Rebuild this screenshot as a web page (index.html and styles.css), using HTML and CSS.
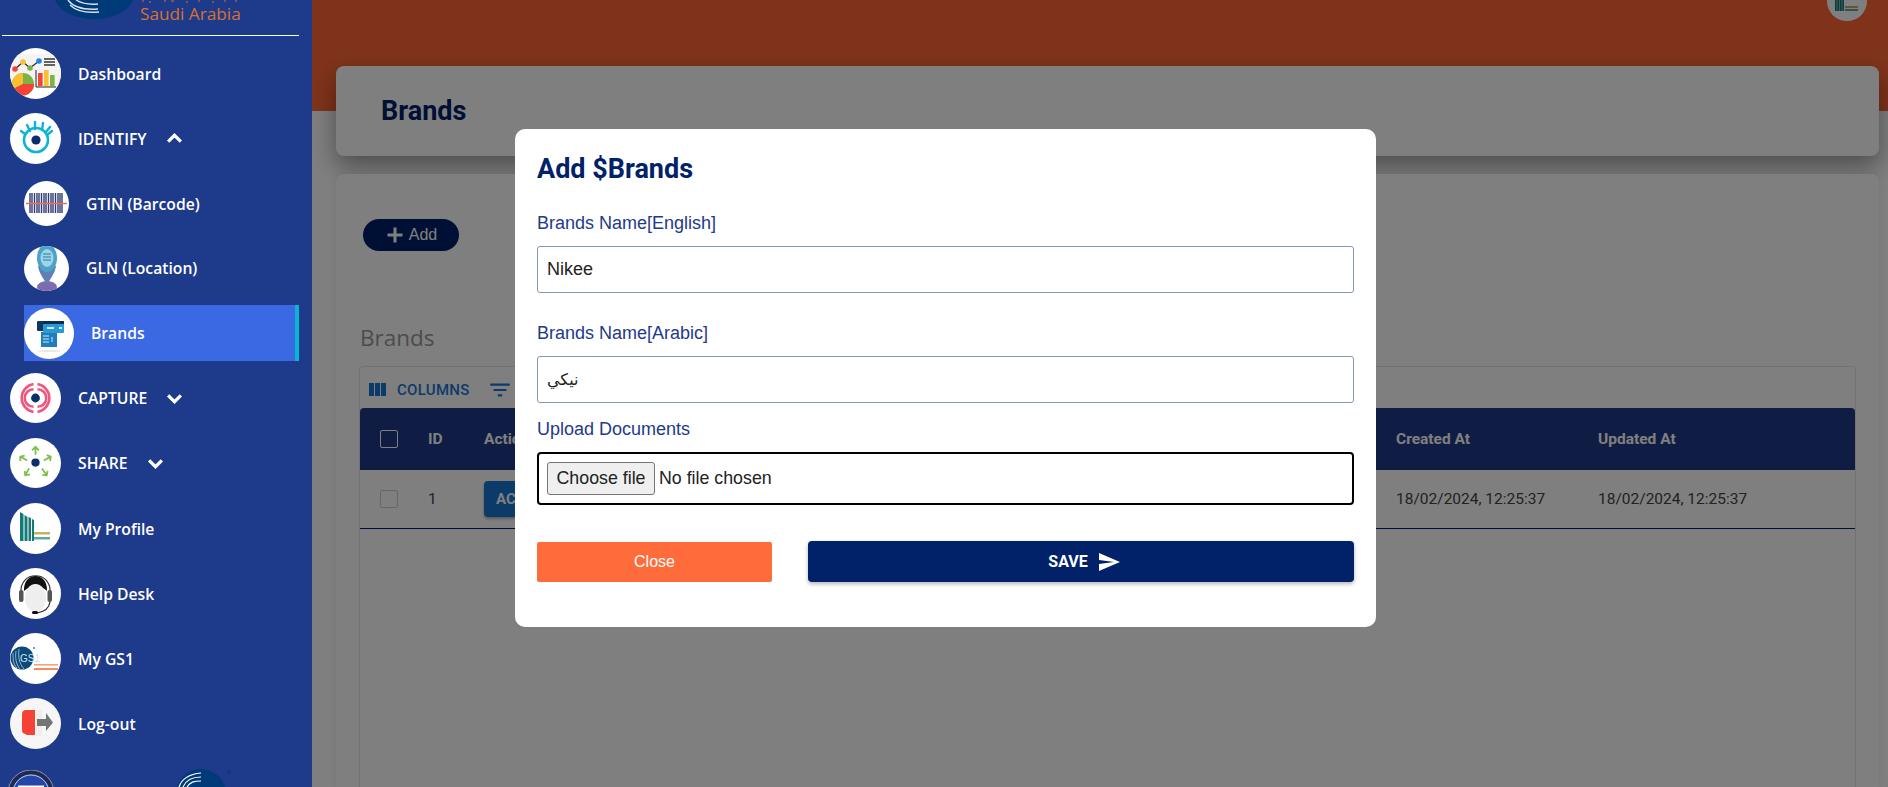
FILE: index.html
```html
<!DOCTYPE html>
<html lang="en">
<head>
<meta charset="utf-8">
<title>Brands</title>
<link rel="stylesheet" href="styles.css">
</head>
<body>
<div class="page">
  <aside class="sidebar">
    <div class="logo">
      <svg class="logo-mark" viewBox="0 0 78 19" width="78" height="19">
        <path d="M0 0H78C74 11 58 19 39 19S4 11 0 0Z" fill="#003a78"/>
        <path d="M13 0C18 7 28 10 43 9M21 0C26 3 32 5 43 4M15 5C22 12 32 13 44 12" fill="none" stroke="#fff" stroke-width="1.4" opacity=".85"/>
      </svg>
      <div class="logo-text">
        <svg class="logo-dots" viewBox="0 0 100 3" width="100" height="3">
          <path d="M2 1h2M9 2h2M24 1h2M31 1h3M46 2h2M58 1h2M72 2h2M84 1h2M95 1h2" stroke="#d9702f" stroke-width="1"/>
        </svg>
        <span class="logo-en">Saudi Arabia</span>
      </div>
    </div>
    <nav class="nav">
      <a class="row row-dash">
        <span class="ico ico-lg">
          <svg viewBox="0 0 51 51">
            <rect x="0" y="6" width="51" height="33" fill="#f4f4f4"/>
            <path d="M5 21L13 14 20 20 29 13" fill="none" stroke="#222" stroke-width="1.1"/>
            <circle cx="5" cy="21" r="2.8" fill="#f44336"/><circle cx="13" cy="14" r="2.8" fill="#fbc02d"/><circle cx="20" cy="20" r="2.8" fill="#7cb342"/><circle cx="29" cy="13" r="2.8" fill="#1e88e5"/>
            <path d="M34 11h11M34 14h11M34 17h11" stroke="#333" stroke-width="1.4"/>
            <path d="M26 22V39H46" fill="none" stroke="#222" stroke-width="1"/>
            <rect x="28" y="25" width="4.6" height="13" fill="#f44336"/><rect x="34" y="22" width="4.6" height="16" fill="#fbc02d"/><rect x="40" y="27" width="4.6" height="11" fill="#7cb342"/>
            <circle cx="13" cy="36" r="11" fill="#7cb342"/>
            <path d="M13 25A11 11 0 0 0 3 41L13 36Z" fill="#fbc02d"/>
            <path d="M3 41A11 11 0 0 0 24 36L13 36Z" fill="#f44336"/>
          </svg>
        </span>
        <span class="label">Dashboard</span>
      </a>
      <a class="row row-identify">
        <span class="ico ico-lg">
          <svg viewBox="0 0 51 51">
            <circle cx="26" cy="27" r="12" fill="none" stroke="#0cb4d8" stroke-width="2.6"/>
            <circle cx="26" cy="27" r="4.6" fill="#0a2f6b"/>
            <path d="M11 18L15 21M17 12L20 18M25 9V16M33 10L32 17M40 14L36 19M42 18L37 22" stroke="#0cb4d8" stroke-width="2.4" stroke-linecap="round"/>
          </svg>
        </span>
        <span class="label">IDENTIFY</span>
        <svg class="chev" viewBox="0 0 16 10"><path d="M2 8L8 2 14 8" /></svg>
      </a>
      <a class="row row-sub row-gtin">
        <span class="ico ico-sm">
          <svg viewBox="0 0 45 45">
            <path d="M6 12V32M8 12V32M10.500 12V32M13 12V32M15 12V32M17.500 12V32M20 12V32M22 12V32M24.500 12V32M27 12V32M29 12V32M31.500 12V32M34 12V32M36 12V32M38 12V32" stroke="#2e3a75" stroke-width="1.400"/>
            <path d="M2 22.500H43" stroke="#f06a55" stroke-width="1.400"/>
          </svg>
        </span>
        <span class="label">GTIN (Barcode)</span>
      </a>
      <a class="row row-sub row-gln">
        <span class="ico ico-sm">
          <svg viewBox="0 0 45 45">
            <ellipse cx="23" cy="41" rx="10" ry="6" fill="#7d6bb0"/>
            <path d="M14 20C15 28 23 38 23 38S31 28 32 20Z" fill="#5f7fb5"/>
            <ellipse cx="23" cy="12" rx="10" ry="14" fill="#4aa3c8"/>
            <ellipse cx="23" cy="12" rx="6.500" ry="9" fill="#9fd3e6"/>
            <path d="M19 8h8M19 11h8M19 14h8" stroke="#2b7ea3" stroke-width="1.200"/>
          </svg>
        </span>
        <span class="label">GLN (Location)</span>
      </a>
      <a class="row row-active">
        <span class="ico ico-md">
          <svg viewBox="0 0 50 51">
            <rect x="13" y="13" width="7" height="10" rx="1" fill="#12375f"/>
            <rect x="17" y="24" width="16" height="15" fill="#1f7fbe"/>
            <rect x="19" y="13" width="21" height="12" rx="1" fill="#2a9ad6"/>
            <rect x="19" y="13" width="21" height="3" fill="#0f2f52"/>
            <rect x="23" y="19" width="7" height="2" fill="#cfe9f7"/><rect x="35" y="19" width="3" height="2" fill="#cfe9f7"/>
            <path d="M19 28h6M19 31h6M19 34h6M28 29v5" stroke="#cfe9f7" stroke-width="1"/>
            <ellipse cx="25" cy="43" rx="12" ry="1" fill="#e8e8e8"/>
          </svg>
        </span>
        <span class="label">Brands</span>
      </a>
      <a class="row row-capture">
        <span class="ico ico-lg">
          <svg viewBox="0 0 51 51">
            <circle cx="25.500" cy="25.500" r="4.500" fill="#0a2f6b"/>
            <g fill="none" stroke="#f2557d" stroke-width="2.600">
              <path d="M23.500 16.500A9 9 0 0 0 23.500 34.500M27.500 16.500A9 9 0 0 1 27.500 34.500"/>
              <path d="M23.500 11.200A14.500 14.500 0 0 0 23.500 39.800M27.500 11.200A14.500 14.500 0 0 1 27.500 39.800"/>
            </g>
          </svg>
        </span>
        <span class="label">CAPTURE</span>
        <svg class="chev" viewBox="0 0 16 10"><path d="M2 2L8 8 14 2" /></svg>
      </a>
      <a class="row row-share">
        <span class="ico ico-lg">
          <svg viewBox="0 0 51 51">
            <circle cx="25.500" cy="25" r="4.200" fill="#0a2f6b"/>
            <g fill="none" stroke="#7cc04b" stroke-width="1.800">
              <path d="M25.500 17V9M22 12.500L25.500 9 29 12.500"/>
              <path d="M17 23L10 19M10 23.500L10 19 14.500 18"/>
              <path d="M34 23L41 19M37 17.500L41 19 40.500 23.500"/>
              <path d="M19 31L15 38M14.500 33.500L15 38 20 37"/>
              <path d="M32 31L37 38M32.500 37.500L37 38 37.800 33.500"/>
            </g>
          </svg>
        </span>
        <span class="label">SHARE</span>
        <svg class="chev" viewBox="0 0 16 10"><path d="M2 2L8 8 14 2" /></svg>
      </a>
      <a class="row row-profile">
        <span class="ico ico-lg">
          <svg viewBox="0 0 51 51">
            <path d="M10 9L13.500 11V38H10ZM14.500 12L17.500 14V38H14.500ZM18.500 14L21 15V38H18.500ZM22 16L24 17V38H22Z" fill="#147a78"/>
            <rect x="24" y="29" width="16" height="2.500" fill="#c7b15a"/>
            <rect x="24" y="34" width="16" height="2.500" fill="#5fa9a0"/>
          </svg>
        </span>
        <span class="label">My Profile</span>
      </a>
      <a class="row row-help">
        <span class="ico ico-lg">
          <svg viewBox="0 0 51 51">
            <path d="M11 25C9 2 42 2 40 25" fill="none" stroke="#333" stroke-width="1.200"/>
            <path d="M14 23C13 3 38 3 37 23Q26 13 14 23Z" fill="#111"/>
            <ellipse cx="25.500" cy="30" rx="10.500" ry="14" fill="#eeeeee"/>
            <rect x="9" y="22" width="4.500" height="12" rx="2" fill="#555"/><rect x="37.500" y="22" width="4.500" height="12" rx="2" fill="#555"/>
            <path d="M40 34C39 41 33 44 27 45" fill="none" stroke="#222" stroke-width="1.200"/>
            <rect x="22" y="43" width="6" height="3" rx="1.500" fill="#111"/>
          </svg>
        </span>
        <span class="label">Help Desk</span>
      </a>
      <a class="row row-gs1">
        <span class="ico ico-lg">
          <svg viewBox="0 0 51 51">
            <circle cx="12" cy="25" r="11.500" fill="#0c4a7c"/>
            <path d="M3 20C3 26 3 31 7 35M6 18C5 25 6 31 10 36M9 16C8 24 9 30 14 36" fill="none" stroke="#cfe0ec" stroke-width=".7"/>
            <text class="mini-gs1" x="10" y="29">GS1</text>
            <rect x="24" y="31" width="24" height="1.600" fill="#f3a27c"/>
            <rect x="24" y="35" width="24" height="2" fill="#f58a5c"/>
            <circle cx="24" cy="15" r="1" fill="#4a7ba6"/>
          </svg>
        </span>
        <span class="label">My GS1</span>
      </a>
      <a class="row row-logout">
        <span class="ico ico-lg ico-gray">
          <svg viewBox="0 0 51 51">
            <rect x="26" y="12" width="6" height="26" fill="#eeeeee"/>
            <path d="M12 16Q12 13 15 12H25V37H17L13 35Q12 34 12 32Z" fill="#f44336"/>
            <path d="M27 21H36V15L43 24.500 36 33V28H27Z" fill="#757575"/>
          </svg>
        </span>
        <span class="label">Log-out</span>
      </a>
    </nav>
    <div class="foot-logos">
      <svg class="foot-badge" viewBox="0 0 46 17" width="46" height="17">
        <circle cx="23" cy="23" r="23" fill="#1c2a57" stroke="#8c93a8" stroke-width="1"/>
        <circle cx="23" cy="23" r="18" fill="#2346a8" stroke="#cfd4e4" stroke-width="1"/>
        <path d="M10 16.500H36" stroke="#fff" stroke-width="2"/>
      </svg>
      <svg class="foot-gs1" viewBox="0 0 56 18" width="56" height="18">
        <circle cx="24" cy="25" r="25" fill="#003a78"/>
        <path d="M2 18C5 9 13 5 24 4M6 18C9 11 15 8 24 8M10 18C13 13 17 12 24 12" fill="none" stroke="#fff" stroke-width="1.200"/>
        <circle cx="52" cy="3" r="2.200" fill="#0a3a7a"/>
      </svg>
    </div>
  </aside>

  <main class="main">
    <header class="topbar">
      <span class="avatar">
        <svg viewBox="0 0 40 21" width="40" height="21">
          <path d="M8 0H17V11H8Z" fill="#147a78"/><path d="M10 0V11M12.500 0V11M15 0V11" stroke="#fff" stroke-width=".5"/>
          <rect x="18" y="6" width="13" height="2" fill="#c7b15a"/><rect x="18" y="9" width="13" height="2" fill="#5fa9a0"/>
        </svg>
      </span>
    </header>
    <section class="card title-card"><h1>Brands</h1></section>
    <section class="card content-card">
      <button class="add-btn" type="button">
        <svg viewBox="0 0 24 24" width="24" height="24"><path d="M19.500 13.500h-6v6h-3v-6h-6v-3h6v-6h3v6h6z"/></svg>
        <span>Add</span>
      </button>
      <h2>Brands</h2>
      <div class="grid">
        <div class="toolbar">
          <span class="tool">
            <svg viewBox="0 0 24 24" width="24" height="24"><path d="M10 18h5V5h-5v13zm-6 0h5V5H4v13zM16 5v13h5V5h-5z"/></svg>
            COLUMNS
          </span>
          <svg class="filter" viewBox="0 0 24 24" width="26" height="26"><path d="M10 18h4v-2h-4v2zM3 6v2h18V6H3zm3 7h12v-2H6v2z"/></svg>
        </div>
        <div class="thead">
          <span class="check check-head"></span>
          <span>ID</span>
          <span>Actions</span>
          <span></span>
          <span>Created At</span>
          <span>Updated At</span>
        </div>
        <div class="tbody-row">
          <span class="check"></span>
          <span>1</span>
          <span><button class="action-btn" type="button">ACTIONS</button></span>
          <span></span>
          <span>18/02/2024, 12:25:37</span>
          <span>18/02/2024, 12:25:37</span>
        </div>
      </div>
    </section>
  </main>

  <div class="overlay"></div>

  <form class="modal">
    <h3>Add $Brands</h3>
    <label class="lbl lbl-first" for="en">Brands Name[English]</label>
    <input class="txt txt-first" id="en" type="text" value="Nikee">
    <label class="lbl lbl-second" for="ar">Brands Name[Arabic]</label>
    <input class="txt txt-second" id="ar" type="text" value="نيكي">
    <span class="lbl lbl-third">Upload Documents</span>
    <div class="file">
      <button class="file-btn" type="button">Choose file</button>
      <span>No file chosen</span>
    </div>
    <div class="actions">
      <button class="close" type="button">Close</button>
      <button class="save" type="button">SAVE
        <svg viewBox="0 0 24 24" width="24" height="24"><path d="M2.010 21 23 12 2.010 3 2 10l15 2-15 2z"/></svg>
      </button>
    </div>
  </form>
</div>
</body>
</html>
```
FILE: styles.css
```css
* { box-sizing: border-box; }
html, body { margin: 0; height: 100%; overflow: hidden; }
body { font-family: "Liberation Sans", Arial, sans-serif; background: #fff; }

.page { display: flex; width: 1888px; height: 787px; overflow: hidden; position: relative; }

/* sidebar */
.sidebar {
  width: 312px; flex: none; height: 787px; background: #1e3a8a; color: #fff;
  position: relative; z-index: 2; overflow: hidden; display: flex; flex-direction: column;
  font-family: "Open Sans", sans-serif;
}
.logo {
  height: 36px; flex: none; margin: 0 13px 0 2px; border-bottom: 1px solid #fff;
  display: flex; align-items: flex-start; padding-left: 53px;
}
.logo-mark { display: block; }
.logo-text { margin-left: 7px; display: flex; flex-direction: column; color: #d9702f; }
.logo-dots { display: block; }
.logo-en { font-size: 17.200px; line-height: 21px; white-space: nowrap; }

.nav { display: flex; flex-direction: column; padding-top: 12px; flex: none; }
.row { display: flex; align-items: center; margin-left: 10px; height: 51px; font-size: 15.700px; font-weight: 600; }
.label { white-space: nowrap; }
.ico { background: #fff; border-radius: 50%; flex: none; overflow: hidden; display: block; }
.ico svg { display: block; width: 100%; height: 100%; }
.ico-lg { width: 51px; height: 51px; margin-right: 17px; }
.ico-sm { width: 45px; height: 45px; margin-right: 17px; }
.ico-md { width: 50px; height: 51px; margin-right: 17px; }
.ico-gray { background: #f6f6f6; }
.chev { width: 17px; height: 11px; fill: none; stroke: #fff; stroke-width: 3; margin-left: 19px; flex: none; }

.row-dash { margin-bottom: 14px; }
.row-identify { margin-bottom: 17px; }
.row-sub { margin-left: 24px; height: 45px; }
.row-gtin { margin-bottom: 20px; }
.row-gln { margin-bottom: 14px; }
.row-gln .label { margin-bottom: 2px; }
.row-active {
  margin-left: 24px; width: 275px; height: 56px; background: #3b68e3;
  border-right: 4px solid #06b6d4; margin-bottom: 12px;
}
.row-capture, .row-share { height: 50px; margin-bottom: 15px; }
.row-capture .ico, .row-share .ico { height: 50px; }
.row-profile, .row-help, .row-gs1 { margin-bottom: 14px; }

.foot-logos { display: flex; align-items: flex-start; margin-top: 21px; padding-left: 8px; }
.foot-badge { display: block; }
.foot-gs1 { display: block; margin-left: 123px; margin-top: -1px; }
.mini-gs1 { font: 10px "Liberation Sans", sans-serif; fill: #cfe0ec; }

/* main */
.main { flex: 1; min-width: 0; background: #fff; }
.topbar { height: 111px; background: #ff6736; display: flex; justify-content: flex-end; align-items: flex-start; padding-right: 21px; }
.avatar { width: 40px; height: 21px; background: #fff; border-radius: 0 0 20px 20px; overflow: hidden; display: block; }
.avatar svg { display: block; }
.card { background: #fff; border-radius: 8px; margin: 0 9px 0 24px; }
.title-card {
  margin-top: -45px; height: 90px; display: flex; align-items: center; padding-left: 45px;
  box-shadow: 0 10px 24px rgba(0, 0, 0, .4);
}
.title-card h1 { margin: 0; font: 700 27px "Roboto", sans-serif; color: #012169; }
.content-card {
  margin-top: 18px; height: 620px; padding: 45px 23px 0 23px;
  box-shadow: 0 0 10px rgba(0, 0, 0, .08); position: relative;
}
.add-btn {
  display: flex; align-items: center; justify-content: center; gap: 2px; width: 96px; height: 32px; margin: 0 0 0 4px;
  border: 0; border-radius: 16px; background: #012169; color: #fff; font: 16px "Liberation Sans", sans-serif; padding: 0 2px 0 0;
}
.add-btn svg { fill: #fff; }
.content-card h2 { margin: 71px 0 12px 1px; font: 400 22.500px/32px "Open Sans", sans-serif; color: #999; }
.grid { border: 1px solid #e4e4e4; border-radius: 4px; height: 440px; font-family: "Roboto", sans-serif; }
.toolbar { height: 41px; display: flex; align-items: center; padding: 4px 0 0 5px; color: #1976d2; }
.tool { display: inline-flex; align-items: center; gap: 8px; font-size: 15px; font-weight: 500; width: 122px; letter-spacing: .3px; flex: none; }
.tool svg, .filter { fill: #1976d2; }
.thead, .tbody-row {
  display: grid; grid-template-columns: 68px 56px 110px 802px 202px 1fr; align-items: center;
}
.thead > :first-child, .tbody-row > :first-child { margin-left: 20px; }
.thead { height: 62px; background: #1e3a8a; color: #fff; font-weight: 700; font-size: 15.500px; border-radius: 4px 4px 0 0; }
.tbody-row { height: 59px; padding-bottom: 1px; border-bottom: 1px solid #012169; font-size: 15.500px; color: #444; }
.check { width: 18px; height: 18px; border: 1px solid #ccc; border-radius: 2px; display: block; }
.check-head { border-color: #fff; }
.action-btn { border: 0; height: 36px; padding: 0 12px; background: #1976d2; color: #fff; border-radius: 4px; font: 700 15px "Roboto", sans-serif; box-shadow: 0 2px 3px rgba(0,0,0,.3); }

/* overlay + modal */
.overlay { position: absolute; inset: 0; background: rgba(0, 0, 0, .5); z-index: 1; }
.modal {
  position: absolute; left: 515px; top: 129px; width: 861px; height: 498px; z-index: 3;
  background: #fff; border-radius: 10px; padding: 23px 22px 0;
  display: flex; flex-direction: column;
}
.modal h3 { margin: 0; font: 700 27px/34px "Roboto", sans-serif; color: #012169; }
.lbl { font-size: 18px; line-height: 22px; color: #1e3a8a; display: block; }
.lbl-first { margin-top: 26px; }
.lbl-second { margin-top: 29px; }
.lbl-third { margin-top: 15px; }
.txt {
  width: 817px; height: 47px; border: 1px solid #8497b0; border-radius: 3px; padding: 0 9px;
  font: 18px "Liberation Sans", "DejaVu Sans", sans-serif; color: #222; background: #fff; outline: 0; display: block;
}
.txt-first { margin-top: 12px; }
.txt-second { margin-top: 12px; font-size: 16px; }
.file {
  margin-top: 12px; width: 817px; height: 53px; padding: 8px; border: 2px solid #000; border-radius: 4px;
  font: 17.800px "Liberation Sans", sans-serif; color: #222; display: flex; align-items: center; gap: 4px;
}
.file-btn {
  height: 33px; width: 108px; font: 17.800px "Liberation Sans", sans-serif; padding: 0;
  border: 1px solid #767676; border-radius: 3px; background: #efefef; color: #222;
}
.actions { display: flex; align-items: flex-end; gap: 36px; margin-top: 36px; width: 817px; }
.close { width: 235px; height: 40px; border: 0; border-radius: 2px; background: #ff6b3a; color: #fff; font: 16px "Liberation Sans", sans-serif; }
.save {
  flex: 1; height: 41px; border: 0; border-radius: 4px; background: #012169; color: #fff; padding: 0 0 0 7px;
  font: 700 16px "Roboto", sans-serif; display: flex; align-items: center; justify-content: center; gap: 9px;
  box-shadow: 0 2px 4px rgba(0, 0, 0, .3);
}
.save svg { fill: #fff; }
```
